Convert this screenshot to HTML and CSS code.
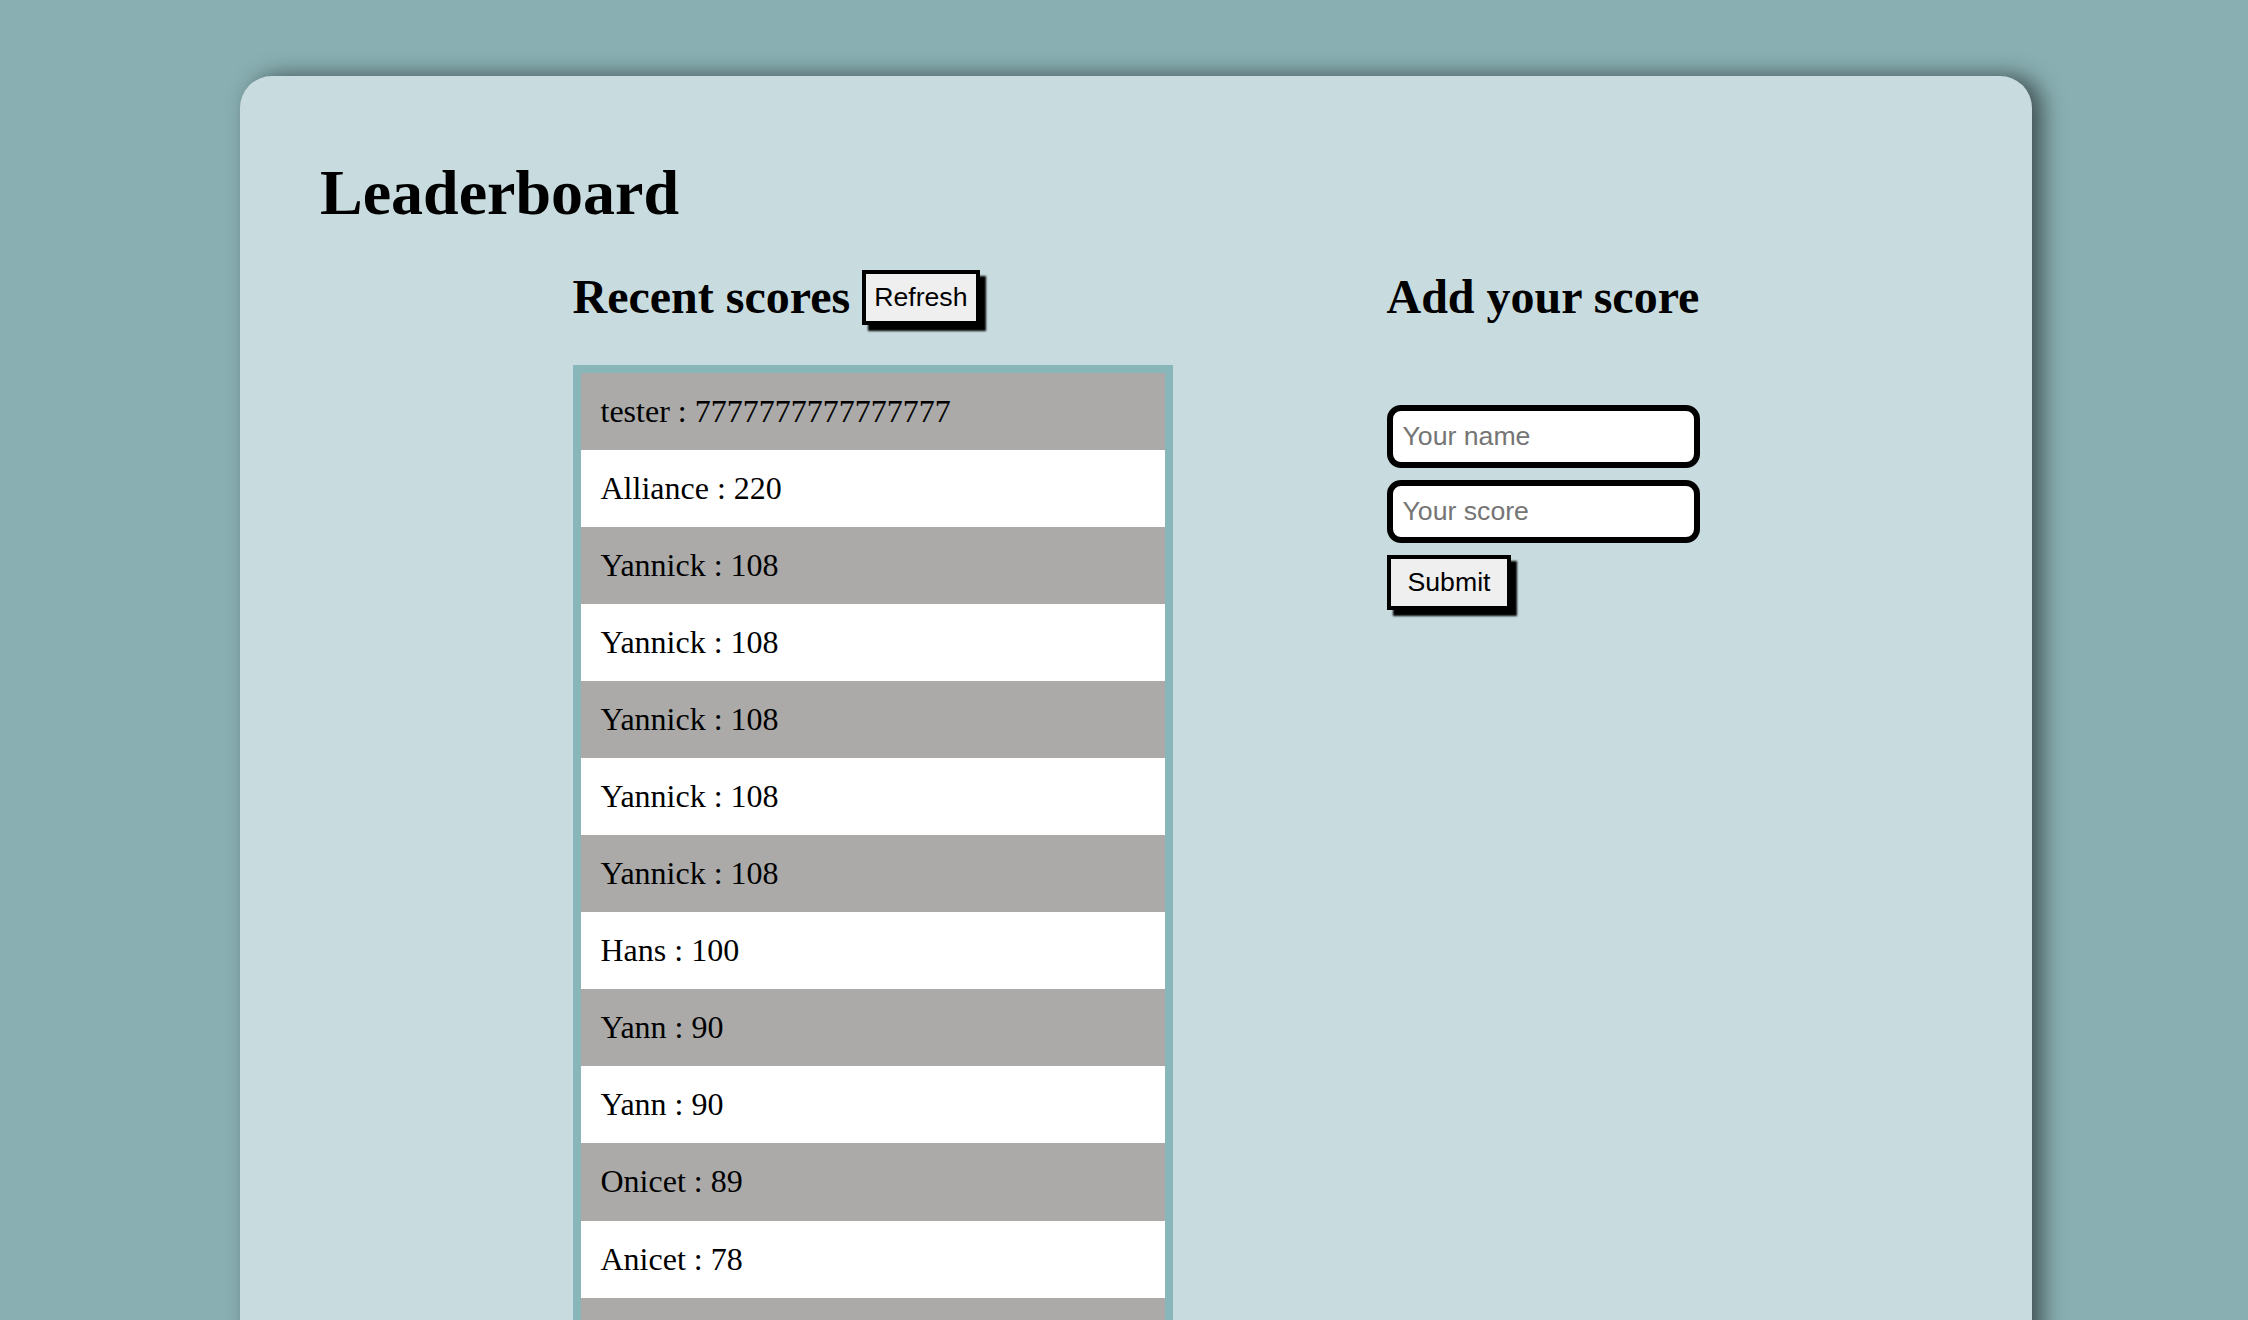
FILE: index.html
```html
<!DOCTYPE html>
<html lang="en">
<head>
<meta charset="utf-8">
<title>Leaderboard</title>
<link rel="stylesheet" href="styles.css">
</head>
<body>
<div class="card">
  <h1 class="title">Leaderboard</h1>
  <div class="columns">
    <section class="recent">
      <div class="recent-head">
        <h2 class="section-title">Recent scores</h2>
        <button class="btn btn-refresh" type="button">Refresh</button>
      </div>
      <ul class="score-list">
        <li class="score">tester : 7777777777777777</li>
        <li class="score">Alliance : 220</li>
        <li class="score">Yannick : 108</li>
        <li class="score">Yannick : 108</li>
        <li class="score">Yannick : 108</li>
        <li class="score">Yannick : 108</li>
        <li class="score">Yannick : 108</li>
        <li class="score">Hans : 100</li>
        <li class="score">Yann : 90</li>
        <li class="score">Yann : 90</li>
        <li class="score">Onicet : 89</li>
        <li class="score">Anicet : 78</li>
        <li class="score">&nbsp;</li>
      </ul>
    </section>
    <section class="add">
      <h2 class="section-title">Add your score</h2>
      <form class="score-form">
        <input class="field" type="text" placeholder="Your name">
        <input class="field" type="text" placeholder="Your score">
        <button class="btn btn-submit" type="button">Submit</button>
      </form>
    </section>
  </div>
</div>
</body>
</html>
```
FILE: styles.css
```css
html, body {
  margin: 0;
  padding: 0;
}

body {
  background: #89afb2;
  font-family: "Liberation Serif", "Times New Roman", serif;
  color: #000;
}

.card {
  box-sizing: border-box;
  width: 1792px;
  margin: 76px 0 0 240px;
  padding: 81px 80px 80px;
  background: #c8dcdf;
  border-radius: 32px;
  box-shadow: 10px 0 22px rgba(0, 0, 0, 0.55);
}

.title {
  margin: 0;
  font-size: 64px;
  line-height: 71px;
  font-weight: bold;
}

.columns {
  display: flex;
  justify-content: center;
  align-items: flex-start;
  gap: 214px;
  margin-top: 42px;
}

.recent {
  width: 600px;
}

.recent-head {
  display: flex;
  align-items: flex-start;
  gap: 12px;
}

.section-title {
  margin: 0;
  font-size: 48px;
  line-height: 53px;
  font-weight: bold;
}

.btn {
  font-family: "Liberation Sans", Arial, sans-serif;
  font-size: 26.67px;
  line-height: normal;
  color: #000;
  background: #efefef;
  border: 4px solid #000;
  border-radius: 0;
  box-shadow: 6px 6px 2px #000;
  margin: 0;
  cursor: pointer;
}

.btn-refresh {
  padding: 8px 8px;
}

.btn-submit {
  padding: 8px 17px;
}

.score-list {
  list-style: none;
  margin: 40px 0 0;
  padding: 0;
  box-sizing: border-box;
  width: 600px;
  border: 8px solid #88b6b9;
}

.score {
  padding: 20px 20px;
  font-size: 32px;
  line-height: 37.05px;
}

.score:nth-child(odd) {
  background: #abaaa8;
}

.score:nth-child(even) {
  background: #ffffff;
}

.add {
  width: 313px;
}

.score-form {
  display: flex;
  flex-direction: column;
  align-items: flex-start;
  gap: 12px;
  margin-top: 82px;
}

.field {
  box-sizing: border-box;
  width: 313px;
  height: 63px;
  margin: 0;
  padding: 0 10px;
  border: 6px solid #000;
  border-radius: 14px;
  background: #fff;
  font-family: "Liberation Sans", Arial, sans-serif;
  font-size: 26.67px;
  outline: none;
}

.field::placeholder {
  color: #757575;
}
```
